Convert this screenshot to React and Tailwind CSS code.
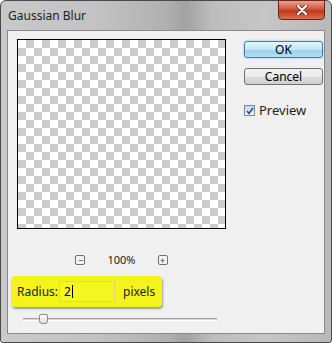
const font = { fontFamily: '"Noto Sans", "Open Sans", sans-serif' };

const ZoomBtn = ({ label }) => (
  <div className="w-[10px] h-[10px] border border-[#707070] rounded-[2px] bg-[#f4f4f4] flex items-center justify-center text-[9px] leading-none text-[#333]">
    {label}
  </div>
);

const DialogButton = ({ label, primary }) => (
  <div
    className={
      primary
        ? "w-[79px] h-[17px] rounded-[3px] border border-[#3c7fb1] bg-[linear-gradient(#e5f4fc,#c4e5f6_50%,#98d1ef_50%,#b2def5)] shadow-[0_0_2px_#5cc0f0] flex items-center justify-center text-[12px] text-black"
        : "w-[79px] h-[17px] rounded-[3px] border border-[#707070] bg-[linear-gradient(#f2f2f2,#ebebeb_50%,#dddddd_50%,#cfcfcf)] flex items-center justify-center text-[12px] text-black"
    }
  >
    {label}
  </div>
);

export default function App() {
  return (
    <div style={font} className="w-[332px] h-[343px] overflow-hidden bg-white">
      <div className="w-[332px] h-[343px] rounded-t-[6px] rounded-b-[3px] border border-[#4a4a4a] bg-[linear-gradient(90deg,#c9c9c9,#c2c2c2_30%,#b0b0b0_50%,#a2a2a2_56%,#bdbdbd_64%,#c6c6c6_80%,#b8b8b8)] flex flex-col">
        <div className="h-[29px] flex items-start relative">
          <span className="text-[12px] text-[#1e1e1e] ml-[7px] mt-[6px]">Gaussian Blur</span>
          <div className="absolute right-[6px] top-[-1px] w-[47px] h-[20px] rounded-b-[4px] border border-[#6b2418] bg-[linear-gradient(#e8a493,#d0553c_45%,#c1381c_55%,#d7704f)] flex items-center justify-center">
            <svg width="12" height="10" viewBox="0 0 12 10">
              <path d="M2 1 L10 9 M10 1 L2 9" stroke="#5a1a10" strokeWidth="3.6" strokeLinecap="round" />
              <path d="M2 1 L10 9 M10 1 L2 9" stroke="#ffffff" strokeWidth="2.4" strokeLinecap="round" />
            </svg>
          </div>
        </div>
        <div className="mx-[6px] mb-[8px] flex-1 bg-[#f0f0f0] border border-[#8a8a8a] flex">
          <div className="flex flex-col pl-[9px] pt-[8px] w-[231px]">
            <div className="w-[209px] h-[190px] border border-black bg-[conic-gradient(#cccccc_25%,#ffffff_0_50%,#cccccc_0_75%,#ffffff_0)] bg-[length:16px_16px]" />
            <div className="w-[209px] flex items-center justify-center gap-[22px] mt-[25px] h-[12px]">
              <ZoomBtn label="−" />
              <span className="text-[11px] text-[#222]">100%</span>
              <ZoomBtn label="+" />
            </div>
            <div className="-ml-[6px] mt-[10px] w-[151px] h-[31px] rounded-[4px] bg-[#f4f41c] shadow-[1px_2px_2px_rgba(0,0,0,0.35)] flex items-center pl-[6px]">
              <span className="text-[12px] text-[#222] w-[42px]">Radius:</span>
              <div className="w-[56px] h-[21px] border border-[#d8d870] bg-[#f6f620] flex items-center pl-[4px] text-[12px] text-black">
                2<span className="w-px h-[13px] bg-black ml-px" />
              </div>
              <span className="text-[12px] text-[#222] ml-[8px]">pixels</span>
            </div>
            <div className="relative mt-[7px] ml-[6px] w-[194px] h-[10px] flex items-center">
              <div className="w-full h-[3px] border-t border-[#a0a0a0] border-b border-b-[#ffffff] bg-[#d6d6d6]" />
              <div className="absolute left-[16px] top-0 w-[9px] h-[10px] rounded-t-[2px] rounded-b-[3px] border border-[#8a8a8a] bg-[linear-gradient(#ffffff,#dcdcdc)]" />
            </div>
          </div>
          <div className="flex flex-col pt-[10px] pl-[5px]">
            <DialogButton label="OK" primary />
            <div className="mt-[10px]">
              <DialogButton label="Cancel" />
            </div>
            <div className="flex items-center mt-[16px]">
              <div className="w-[11px] h-[11px] border border-[#7a8a9a] bg-[linear-gradient(#c8d8ea,#eef4fb)] flex items-center justify-center">
                <svg width="8" height="8" viewBox="0 0 8 8">
                  <path d="M1 4 L3 6.5 L7 1" stroke="#2a4f8f" strokeWidth="1.6" fill="none" />
                </svg>
              </div>
              <span className="text-[13px] text-[#222] ml-[4px]">Preview</span>
            </div>
          </div>
        </div>
      </div>
    </div>
  );
}
